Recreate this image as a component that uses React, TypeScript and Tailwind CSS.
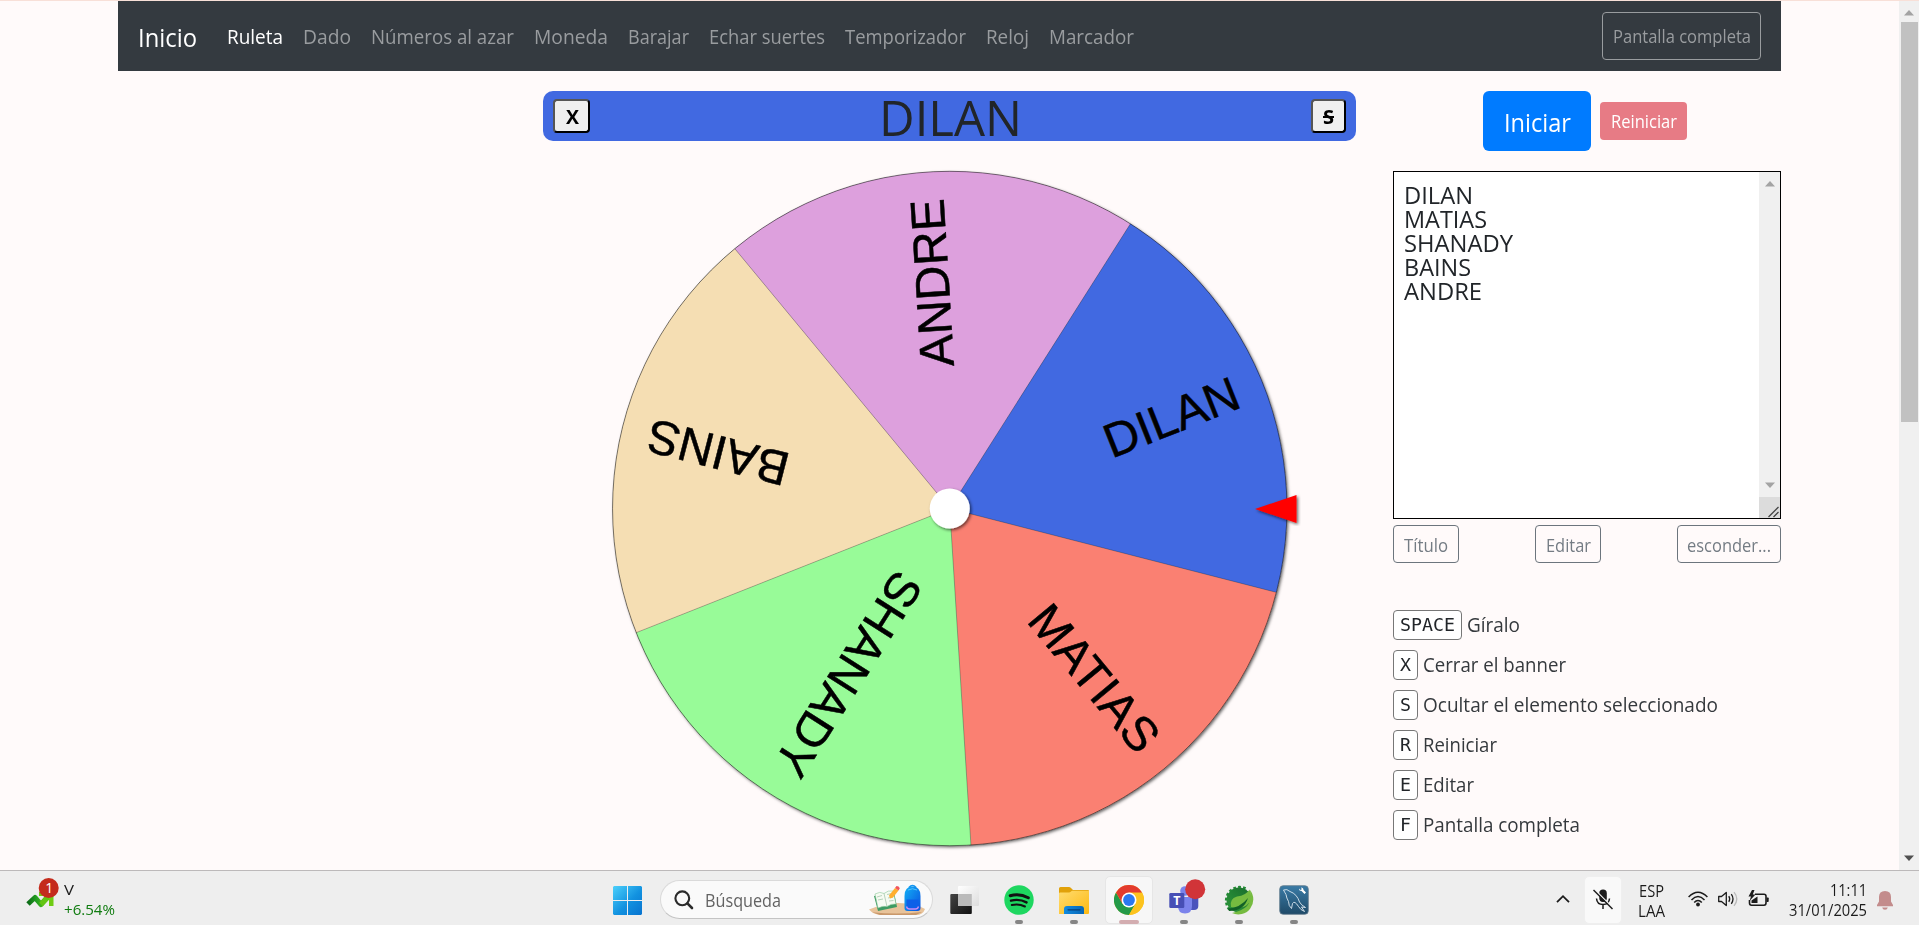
import { useLayoutEffect, useRef, useState } from "react";
import type { ReactNode } from "react";

/** One line of text condensed or widened to fill the width given by its class. */
function Fit({ className, children }: { className: string; children: ReactNode }) {
  const outer = useRef<HTMLSpanElement>(null);
  const inner = useRef<HTMLSpanElement>(null);
  const [scale, setScale] = useState(1);
  useLayoutEffect(() => {
    if (outer.current && inner.current) {
      setScale(outer.current.offsetWidth / inner.current.getBoundingClientRect().width);
    }
  }, []);
  return (
    <span ref={outer} className={`block shrink-0 whitespace-nowrap text-left ${className}`}>
      <span ref={inner} className="inline-block origin-left" style={{ transform: `scaleX(${scale})` }}>
        {children}
      </span>
    </span>
  );
}

const navItems = [
  { label: "Ruleta", cls: "w-[56px] text-white" },
  { label: "Dado", cls: "w-[48px]" },
  { label: "Números al azar", cls: "w-[143px]" },
  { label: "Moneda", cls: "w-[74px]" },
  { label: "Barajar", cls: "w-[61px]" },
  { label: "Echar suertes", cls: "w-[116px]" },
  { label: "Temporizador", cls: "w-[121px]" },
  { label: "Reloj", cls: "w-[43px]" },
  { label: "Marcador", cls: "w-[85px]" },
];

function Navbar() {
  return (
    <nav className="flex h-[70px] items-center bg-[#343a40] px-5 text-xl leading-[30px] text-[#999c9f]">
      <Fit className="mr-[30px] w-[59px] pt-px text-[25px] text-white">Inicio</Fit>
      <div className="flex gap-5 pt-0.5">
        {navItems.map((item) => (
          <Fit key={item.label} className={item.cls}>
            {item.label}
          </Fit>
        ))}
      </div>
      <button className="ml-auto flex h-12 w-[159px] items-center justify-center rounded-[4px] border border-[#999c9f] text-[17.5px]">
        <Fit className="w-[138px]">Pantalla completa</Fit>
      </button>
    </nav>
  );
}

function Banner() {
  return (
    <div className="flex h-[50px] items-center rounded-[10px] bg-[#4169e1] px-2.5 text-black">
      <button className="flex h-[34px] w-[37px] items-center justify-center rounded-[4px] border-2 border-t-[#555] border-r-black border-b-black border-l-[#555] bg-[#efefef] pt-0.5 pl-px text-xl leading-none font-bold">
        <Fit className="w-[13px]">X</Fit>
      </button>
      <div className="flex grow justify-center pt-0.5 text-[50px] leading-[50px] text-[#212529]">
        <Fit className="w-[143px]">DILAN</Fit>
      </div>
      <button className="flex h-[34px] w-[35px] items-center justify-center rounded-[4px] border-2 border-t-[#555] border-r-black border-b-black border-l-[#555] bg-[#efefef] pt-0.5 text-xl leading-none font-bold">
        <Fit className="w-[11px]">
          <s>S</s>
        </Fit>
      </button>
    </div>
  );
}

const CX = 949.75;
const CY = 508.5;
const R = 337.2;

const slices = [
  { name: "MATIAS", color: "#fa8072", start: 14.4 },
  { name: "SHANADY", color: "#98fb98", start: 86.4 },
  { name: "BAINS", color: "#f5deb3", start: 158.4 },
  { name: "ANDRE", color: "#dda0dd", start: 230.4 },
  { name: "DILAN", color: "#4169e1", start: 302.4 },
];

function rim(deg: number) {
  const a = (deg * Math.PI) / 180;
  return `${CX + R * Math.cos(a)} ${CY + R * Math.sin(a)}`;
}

function Wheel() {
  return (
    <svg className="mt-5 block h-[700px] w-[813px]" viewBox="543 161 813 700">
      <defs>
        <filter id="soft" x="-10%" y="-10%" width="120%" height="120%">
          <feDropShadow dx="1.5" dy="1.5" stdDeviation="1.5" floodColor="#000" floodOpacity="0.6" />
        </filter>
      </defs>
      <circle cx={CX} cy={CY} r={R} fill="#999" filter="url(#soft)" />
      {slices.map((s) => (
        <path key={s.name} d={`M${CX} ${CY}L${rim(s.start)}A${R} ${R} 0 0 1 ${rim(s.start + 72)}Z`} fill={s.color} />
      ))}
      {slices.map((s) => (
        <path key={s.name} d={`M${CX} ${CY}L${rim(s.start)}`} stroke="#000" strokeOpacity="0.3" strokeWidth="0.8" />
      ))}
      <circle cx={CX} cy={CY} r={R} fill="none" stroke="#000" strokeOpacity="0.6" strokeWidth="0.8" />
      {slices.map((s) => (
        <text
          key={s.name}
          transform={`translate(${CX} ${CY}) rotate(${s.start + 36})`}
          x="310.3"
          y="13.3"
          textAnchor="end"
          stroke="#000"
          strokeWidth="0.5"
          className="fill-black font-['Liberation_Sans',sans-serif] text-[48px]"
        >
          {s.name}
        </text>
      ))}
      <circle cx={CX} cy={CY} r="20" fill="#fff" filter="url(#soft)" />
      <path d="M1255 509L1296.500 495V523Z" fill="#f00" filter="url(#soft)" />
    </svg>
  );
}

const names = [
  { name: "DILAN", cls: "w-[69px]" },
  { name: "MATIAS", cls: "w-[83px]" },
  { name: "SHANADY", cls: "w-[109px]" },
  { name: "BAINS", cls: "w-[67px]" },
  { name: "ANDRE", cls: "w-[78px]" },
];

function NameBox() {
  return (
    <div className="mt-5 flex h-[348px] border border-black bg-white">
      <div className="grow pt-[11px] pl-[10px] text-2xl leading-6 text-[#212529]">
        {names.map((n) => (
          <Fit key={n.name} className={n.cls}>
            {n.name}
          </Fit>
        ))}
      </div>
      <div className="flex w-[21px] flex-col items-center bg-[#f0f0f0]">
        <svg className="mt-[9px] h-[6px] w-[10px]" viewBox="0 0 10 6">
          <path d="M0 5.5L5 0L10 5.5Z" fill="#a3a3a3" />
        </svg>
        <svg className="mt-auto mb-[9px] h-[6px] w-[10px]" viewBox="0 0 10 6">
          <path d="M0 0.5L5 6L10 0.5Z" fill="#a3a3a3" />
        </svg>
        <svg className="h-[21px] w-[21px] bg-[#dcdcdc]" viewBox="0 0 21 21">
          <path d="M9.5 20L19.5 10M14.5 20L19.5 15" stroke="#444" strokeWidth="1.3" />
        </svg>
      </div>
    </div>
  );
}

const shortcuts = [
  { k: "SPACE", kc: "w-[69px]", kw: "w-[55px]", label: "Gíralo", cls: "w-[53px]" },
  { k: "X", kc: "w-[25px]", kw: "w-[11px]", label: "Cerrar el banner", cls: "w-[143px]" },
  { k: "S", kc: "w-[25px]", kw: "w-[11px]", label: "Ocultar el elemento seleccionado", cls: "w-[295px]" },
  { k: "R", kc: "w-[25px]", kw: "w-[11px]", label: "Reiniciar", cls: "w-[74px]" },
  { k: "E", kc: "w-[25px]", kw: "w-[11px]", label: "Editar", cls: "w-[51px]" },
  { k: "F", kc: "w-[25px]", kw: "w-[11px]", label: "Pantalla completa", cls: "w-[157px]" },
];

const smallButton = "flex h-[38px] items-center justify-center rounded-[4px] border border-[#6c757d] pt-0.5";

function SidePanel() {
  return (
    <aside className="w-[388px]">
      <div className="flex h-[60px] items-center gap-[9px] pl-[90px] text-white">
        <button className="flex h-[60px] w-[108px] items-center justify-center rounded-[6px] bg-[#007bff] pt-[3px] text-[25px]">
          <Fit className="w-[67px]">Iniciar</Fit>
        </button>
        <button className="flex h-[38px] w-[87px] items-center justify-center rounded-[4px] bg-[#e77b85] pt-px text-[17.5px]">
          <Fit className="w-[66px]">Reiniciar</Fit>
        </button>
      </div>
      <NameBox />
      <div className="mt-1.5 flex justify-between text-[17.5px] text-[#747c84]">
        <button className={`w-[66px] ${smallButton}`}>
          <Fit className="w-[44px]">Título</Fit>
        </button>
        <button className={`w-[66px] ${smallButton}`}>
          <Fit className="w-[45px]">Editar</Fit>
        </button>
        <button className={`w-[104px] ${smallButton}`}>
          <Fit className="w-[84px]">esconder...</Fit>
        </button>
      </div>
      <div className="mt-[47px] flex flex-col gap-2.5 text-xl leading-[30px] text-[#35393d]">
        {shortcuts.map((s) => (
          <div key={s.k} className="flex h-[30px] items-center gap-[5px]">
            <kbd
              className={`flex h-[30px] items-center justify-center rounded-[4px] border border-[#777] bg-white font-['DejaVu_Sans_Mono',monospace] text-[17.3px] text-[#212529] ${s.kc}`}
            >
              <Fit className={s.kw}>{s.k}</Fit>
            </kbd>
            <Fit className={s.cls}>{s.label}</Fit>
          </div>
        ))}
      </div>
    </aside>
  );
}

function PageScrollbar() {
  return (
    <div className="flex w-5 flex-col items-center bg-[#f0f0f0]">
      <svg className="mt-[9px] h-[6px] w-[10px]" viewBox="0 0 10 6">
        <path d="M0 5.5L5 0L10 5.5Z" fill="#a3a3a3" />
      </svg>
      <div className="mt-[6px] h-[400px] w-[17px] bg-[#c1c1c1]" />
      <svg className="mt-auto mb-[9px] h-[6px] w-[10px]" viewBox="0 0 10 6">
        <path d="M0 0.5L5 6L10 0.5Z" fill="#505050" />
      </svg>
    </div>
  );
}

function TaskbarApp({ running, children }: { running?: boolean; children: ReactNode }) {
  return (
    <div className="flex h-[54px] w-[55px] flex-col items-center pt-[14px]">
      {children}
      <span className={running ? "mt-[5px] h-1 w-2 rounded-full bg-[#858585]" : "h-1"} />
    </div>
  );
}

function SearchBox() {
  return (
    <div className="ml-[18px] flex h-[39px] w-[273px] items-center rounded-full border border-[#dadada] border-b-[#c4c4c4] bg-[#fafafa] pl-[13px]">
      <svg className="h-5 w-5" viewBox="0 0 20 20" fill="none" stroke="#2b2b2b" strokeWidth="2.1" strokeLinecap="round">
        <circle cx="8.3" cy="8.3" r="6.9" />
        <path d="M13.4 13.4L18 18" strokeWidth="2.6" />
      </svg>
      <Fit className="ml-[11px] w-[76px] pt-0.5 text-[17.5px] text-[#636363]">Búsqueda</Fit>
      <svg className="mt-px mr-[6px] ml-auto h-8 w-[58px]" viewBox="0 0 58 32">
        <defs>
          <linearGradient id="pack" x1="0" y1="0" x2="1" y2="1">
            <stop offset="0" stopColor="#12b0f5" />
            <stop offset="1" stopColor="#0a50e0" />
          </linearGradient>
        </defs>
        <path d="M1 25.5Q14 20 30 19Q48 19 57 25Q55 31 48 31H12Q5 30 1 25.5Z" fill="#e8c39a" />
        <path d="M4 28.3Q30 31 54 28L48 31H12Z" fill="#c9986b" />
        <path d="M6 12L26 8L29 23L10 27Z" fill="#3d9b62" />
        <path d="M7 10Q12 7 16 9.5Q20 6 25 7L28 20Q23 19.5 19 22.5Q15 21.5 10 24Z" fill="#f6fbf2" stroke="#8dc79a" strokeWidth="0.6" />
        <path d="M16 9.5L19 22.5M9 13L14 11.5M10 16L15 15M19 10.5L24 9.5M20 14L25 13M21 17L25.5 16.5" stroke="#9cc0a4" strokeWidth="0.7" />
        <path d="M22 14.5L21 11.5L27 4L30.5 6.5L25 13.5Z" fill="#ffae2e" />
        <path d="M27 4L28.5 2Q31 2 31.8 4.2L30.5 6.5Z" fill="#f2545b" />
        <path d="M41 3.5Q44.5 -0.5 48 3.5" fill="none" stroke="#1595f0" strokeWidth="1.6" />
        <path d="M36.5 12Q36.5 2.5 44.5 2.5Q52.5 2.5 52.5 12V24Q52.5 27 49.5 27H39.5Q36.5 27 36.5 24Z" fill="url(#pack)" />
        <path d="M40 6Q44.5 3.5 49 6" fill="none" stroke="#5cc9ff" strokeWidth="0.9" />
        <path d="M38.5 15.5H50.5V22.5Q50.5 25 48 25H41Q38.5 25 38.5 22.5Z" fill="#0d60e8" />
        <path d="M38.5 22.5Q39 25 41.5 25H47.5Q50 25 50.5 22.5" fill="none" stroke="#c88cf5" strokeWidth="1.3" />
      </svg>
    </div>
  );
}

function Taskbar() {
  return (
    <footer className="flex h-[55px] border-t border-[#bcb9ba] bg-[#eeeeee] text-[#1b1b1b]">
      <div className="flex w-[613px] pt-[5px] pl-[26px]">
        <svg className="h-[34px] w-[36px]" viewBox="0 0 36 34">
          <defs>
            <linearGradient id="stock" x1="0" x2="1">
              <stop offset="0" stopColor="#0c6b17" />
              <stop offset="0.4" stopColor="#23a021" />
              <stop offset="1" stopColor="#7ad313" />
            </linearGradient>
          </defs>
          <path d="M2 28L9 21.5L15 28.5L24 18" fill="none" stroke="url(#stock)" strokeWidth="5" strokeLinejoin="round" />
          <path d="M15 28.5L26 17" stroke="#62c512" strokeWidth="5" />
          <path d="M13 16H27.5V30H23V20H13Z" fill="#6fcc13" />
          <circle cx="22.7" cy="12" r="10" fill="#c42b1c" />
          <text x="23.2" y="17" textAnchor="middle" fill="#fff" className="font-['Open_Sans',sans-serif] text-[14px]">
            1
          </text>
        </svg>
        <div className="ml-[2px] pt-[3px] text-[15px] leading-5">
          <Fit className="w-[10px]">V</Fit>
          <Fit className="w-[51px] text-[#107c10]">+6.54%</Fit>
        </div>
      </div>
      <div className="flex items-start">
        <svg className="mt-[15px] h-[29px] w-[29px]" viewBox="0 0 29 29">
          <defs>
            <linearGradient id="win" x1="0" y1="0" x2="29" y2="29" gradientUnits="userSpaceOnUse">
              <stop offset="0" stopColor="#4cd0fb" />
              <stop offset="0.55" stopColor="#1292e0" />
              <stop offset="1" stopColor="#0873cf" />
            </linearGradient>
          </defs>
          <path d="M1 0H14V14H0V1ZM15 0H28L29 1V14H15ZM0 15H14V29H1L0 28ZM15 15H29V28L28 29H15Z" fill="url(#win)" />
        </svg>
        <div className="pt-[9px]">
          <SearchBox />
        </div>
        <div className="ml-[3px] flex">
          <TaskbarApp>
            <svg className="h-[30px] w-[30px]" viewBox="0 0 30 30">
              <defs>
                <linearGradient id="tvd" x1="0" y1="0" x2="1" y2="1">
                  <stop offset="0" stopColor="#444" />
                  <stop offset="1" stopColor="#111" />
                </linearGradient>
                <linearGradient id="tvl" x1="0" y1="0" x2="1" y2="1">
                  <stop offset="0" stopColor="#fff" />
                  <stop offset="1" stopColor="#ddd" />
                </linearGradient>
              </defs>
              <rect x="1.3" y="9" width="21.500" height="20" rx="1" fill="url(#tvd)" />
              <rect x="9" y="1" width="21" height="20" rx="1" fill="url(#tvl)" />
              <path d="M9 9H22.8V21H10Q9 21 9 20Z" fill="#bababa" />
            </svg>
          </TaskbarApp>
          <TaskbarApp running>
            <svg className="h-[30px] w-[30px]" viewBox="0 0 30 30">
              <circle cx="15" cy="15" r="14.7" fill="#1ed760" />
              <g fill="none" stroke="#121212" strokeLinecap="round">
                <path d="M6.2 10.7Q15.5 8 24.3 12.7" strokeWidth="3" />
                <path d="M7 15.6Q15.5 13.5 22.5 17.4" strokeWidth="2.4" />
                <path d="M7.8 20Q15 18.3 20.9 21.5" strokeWidth="2" />
              </g>
            </svg>
          </TaskbarApp>
          <TaskbarApp running>
            <svg className="h-[30px] w-[30px]" viewBox="0 0 30 30">
              <defs>
                <linearGradient id="fold" x1="0" y1="0" x2="1" y2="1">
                  <stop offset="0" stopColor="#ffdc70" />
                  <stop offset="1" stopColor="#fdb912" />
                </linearGradient>
                <linearGradient id="tray" x1="0" x2="1">
                  <stop offset="0" stopColor="#118be0" />
                  <stop offset="1" stopColor="#0766b5" />
                </linearGradient>
              </defs>
              <path d="M0 3.5Q0 2 1.5 2H10Q11 2 12 3L14 5H29Q30 5 30 6V12H0Z" fill="#e1a10a" />
              <path d="M0 8.5Q0 7.5 1 7.5H10Q11 7.5 12 6.5L13 5.7H30V28Q30 29 29 29H0Z" fill="url(#fold)" />
              <path d="M5 29V24Q5 21 8 21H22Q25 21 25 24V29Z" fill="url(#tray)" />
              <path d="M9 24.8H21" stroke="#063f7a" strokeWidth="1.2" strokeLinecap="round" />
            </svg>
          </TaskbarApp>
          <div className="h-[54px] w-[55px]">
            <div className="mx-auto mt-[5px] flex h-[48px] w-[48px] flex-col items-center rounded-[5px] border border-[#e6e6e6] bg-[#f7f7f7] pt-[8px]">
              <svg className="h-[30px] w-[30px] shrink-0" viewBox="0 0 30 30">
                <circle cx="15" cy="15" r="15" fill="#fcc31e" />
                <path d="M15 30A15 15 0 0 1 2 7.5L8.5 18.75L21.5 18.75Z" fill="#249a48" />
                <path d="M28 7.5A15 15 0 0 1 15 30L21.5 18.75L15 7.5Z" fill="#fcc31e" />
                <path d="M2 7.5A15 15 0 0 1 28 7.5H15L8.5 18.75Z" fill="#e33b2e" />
                <circle cx="15" cy="15" r="7.5" fill="#fff" />
                <circle cx="15" cy="15" r="5.9" fill="#2b78f0" />
              </svg>
              <span className="mt-[5px] h-1 w-5 shrink-0 rounded-full bg-[#d3adb0]" />
            </div>
          </div>
          <TaskbarApp running>
            <svg className="h-[30px] w-[30px] overflow-visible" viewBox="0 0 30 30">
              <circle cx="24.5" cy="8" r="3.5" fill="#4b53bc" />
              <path d="M19 12H29.3V21Q29.3 25 25 25H19Z" fill="#4b53bc" />
              <circle cx="16" cy="6" r="4.8" fill="#7b83eb" />
              <path d="M9 12H23V21Q23 28.5 16 28.5Q9 28.5 9 21Z" fill="#7b83eb" />
              <rect x="0.3" y="8" width="15" height="15" rx="1.3" fill="#474fb5" />
              <text x="7.8" y="20" textAnchor="middle" fill="#fff" className="font-['Open_Sans',sans-serif] text-[12.5px] font-bold">
                T
              </text>
              <circle cx="26.2" cy="4.2" r="10" fill="#d13438" />
            </svg>
          </TaskbarApp>
          <TaskbarApp running>
            <svg className="h-[30px] w-[30px]" viewBox="0 0 30 30">
              <defs>
                <linearGradient id="gear" x1="0" y1="1" x2="1" y2="0">
                  <stop offset="0" stopColor="#2f9a3c" />
                  <stop offset="1" stopColor="#176a2b" />
                </linearGradient>
              </defs>
              <path d="M6 24A12.800 12.800 0 0 1 22 4.500" fill="none" stroke="#238a35" strokeWidth="4" strokeDasharray="2.600 2" />
              <circle cx="15" cy="15" r="12.5" fill="url(#gear)" />
              <path d="M26 5A15 15 0 0 1 8 28Q18 26 23 21Q27 16 26 5Z" fill="#76bb40" />
              <path d="M7 22Q5 14 13 11.500Q22 10.500 25.500 4.500Q29.500 15 23 20Q18 24 7 22Z" fill="#76bb40" />
              <path d="M4 23.500Q16 23 24 13Q20 26 5 26Z" fill="#126127" />
            </svg>
          </TaskbarApp>
          <TaskbarApp running>
            <svg className="h-[30px] w-[30px]" viewBox="0 0 30 30">
              <defs>
                <linearGradient id="sea" x1="0" y1="0" x2="0" y2="1">
                  <stop offset="0" stopColor="#3a7ba6" />
                  <stop offset="1" stopColor="#1f4a68" />
                </linearGradient>
              </defs>
              <rect x="0.7" y="0.7" width="28.6" height="28.6" rx="3.5" fill="url(#sea)" stroke="#60788a" strokeWidth="0.8" />
              <path
                d="M4.500 5Q8 3.500 11 6.500Q18 9 20.500 17Q22 20 26.500 22.500L22.500 22L25.500 26.500Q21.500 25 19.500 21.500Q15.500 15 13.500 18.500Q13 21 12.500 23.500Q9.500 21 9.500 16.500Q7.500 13 7 9.500Q5.500 7 4.500 5Z"
                fill="none"
                stroke="#dce8f0"
                strokeWidth="0.9"
                strokeLinejoin="round"
              />
              <path d="M20 3.500Q20 6 22.500 6L25.500 9L27 7.500L24.500 5Q24.500 2.500 22 2.500L22.800 4.300L21.500 5Z" fill="#fff" />
            </svg>
          </TaskbarApp>
        </div>
      </div>
      <div className="ml-auto flex h-[54px] items-start text-[15.5px] leading-5">
        <svg className="mt-[23px] mr-[14px] h-[10px] w-[14px]" viewBox="0 0 14 10" fill="none" stroke="#1b1b1b" strokeWidth="1.8">
          <path d="M1 8.2L7 2.2L13 8.2" />
        </svg>
        <div className="mt-[5px] flex h-[48px] w-[38px] items-center justify-center rounded-[5px] border border-[#efefef] bg-[#f9f9f9]">
          <svg className="mb-[2px] h-[21px] w-[20px]" viewBox="0 0 20 21">
            <rect x="6.3" y="0.5" width="7.5" height="12.5" rx="3.7" fill="#1b1b1b" />
            <path d="M3.5 9.5Q4 15.5 10 15.5Q16 15.5 16.5 9.5M10 15.5V20" fill="none" stroke="#1b1b1b" strokeWidth="1.5" />
            <path d="M1.5 0.5L20 19" stroke="#f9f9f9" strokeWidth="1.5" />
            <path d="M0.5 1L19.5 20" stroke="#1b1b1b" strokeWidth="1.5" />
          </svg>
        </div>
        <div className="mt-[10px] ml-4 flex w-[26px] flex-col items-center">
          <Fit className="w-[25px]">ESP</Fit>
          <Fit className="w-[27px]">LAA</Fit>
        </div>
        <svg className="mt-[20px] ml-[24px] h-4 w-5" viewBox="0 0 20 16" fill="none" stroke="#1b1b1b" strokeWidth="1.5">
          <path d="M0.6 6Q10 -3.6 19.4 6" />
          <path d="M3.5 8.9Q10 2.2 16.5 8.9" />
          <path d="M6.2 11.5Q10 7.5 13.8 11.5" />
          <circle cx="10" cy="13.5" r="1.9" fill="#1b1b1b" stroke="none" />
        </svg>
        <svg className="mt-[20px] ml-[10px] h-4 w-[21px]" viewBox="0 0 21 16" fill="none" stroke="#1b1b1b" strokeWidth="1.3" strokeLinejoin="round">
          <path d="M0.7 5.5H3.5L8.3 1.4V14.6L3.5 10.5H0.7Z" />
          <path d="M10.8 5.2Q12.6 8 10.8 10.8M13.3 3.2Q16.7 8 13.3 12.8" />
          <path d="M16 1.2Q21.6 8 16 14.8" stroke="#bbb" />
        </svg>
        <svg className="mt-[19px] ml-[9px] h-[18px] w-[21px]" viewBox="0 0 21 18">
          <path d="M7 4.2H16Q18 4.2 18 6.2V13Q18 15.2 16 15.2H3.5Q1.5 15.2 1.5 13V10" fill="none" stroke="#1b1b1b" strokeWidth="1.6" />
          <path d="M18.5 7.5H20Q20.7 7.5 20.7 8.300V11Q20.7 12 20 12H18.5Z" fill="#1b1b1b" />
          <path d="M9.5 6.5V13H3.5V10.500Z" fill="#1b1b1b" />
          <path d="M4 0L0.5 6.500H3L1.500 11L7.500 4.500H4.800L6.500 0Z" fill="#1b1b1b" />
        </svg>
        <div className="mt-[9px] ml-5 flex w-[78px] flex-col items-end">
          <Fit className="w-[37px]">11:11</Fit>
          <Fit className="w-[78px]">31/01/2025</Fit>
        </div>
        <svg className="mt-[19px] mr-[26px] ml-[10px] h-5 w-4" viewBox="0 0 16 20">
          <path d="M8 1Q14 1 14 7V11.500L16 15V16.200H0V15L2 11.500V7Q2 1 8 1Z" fill="#c38c8c" />
          <path d="M5.200 17.500H10.800Q10.300 19.800 8 19.800Q5.700 19.800 5.200 17.500Z" fill="#c38c8c" />
        </svg>
      </div>
    </footer>
  );
}

export default function App() {
  return (
    <div className="flex h-[925px] w-[1919px] flex-col overflow-hidden bg-[#fffafa] font-['Open_Sans','Noto_Sans',sans-serif]">
      <div className="h-px shrink-0 bg-[#f8e0d8]" />
      <div className="flex h-[869px] shrink-0">
        <div className="w-[1899px] pl-[118px]">
          <div className="w-[1663px]">
            <Navbar />
            <main className="flex justify-end gap-[37px] pt-5">
              <section className="w-[813px]">
                <Banner />
                <Wheel />
              </section>
              <SidePanel />
            </main>
          </div>
        </div>
        <PageScrollbar />
      </div>
      <Taskbar />
    </div>
  );
}
